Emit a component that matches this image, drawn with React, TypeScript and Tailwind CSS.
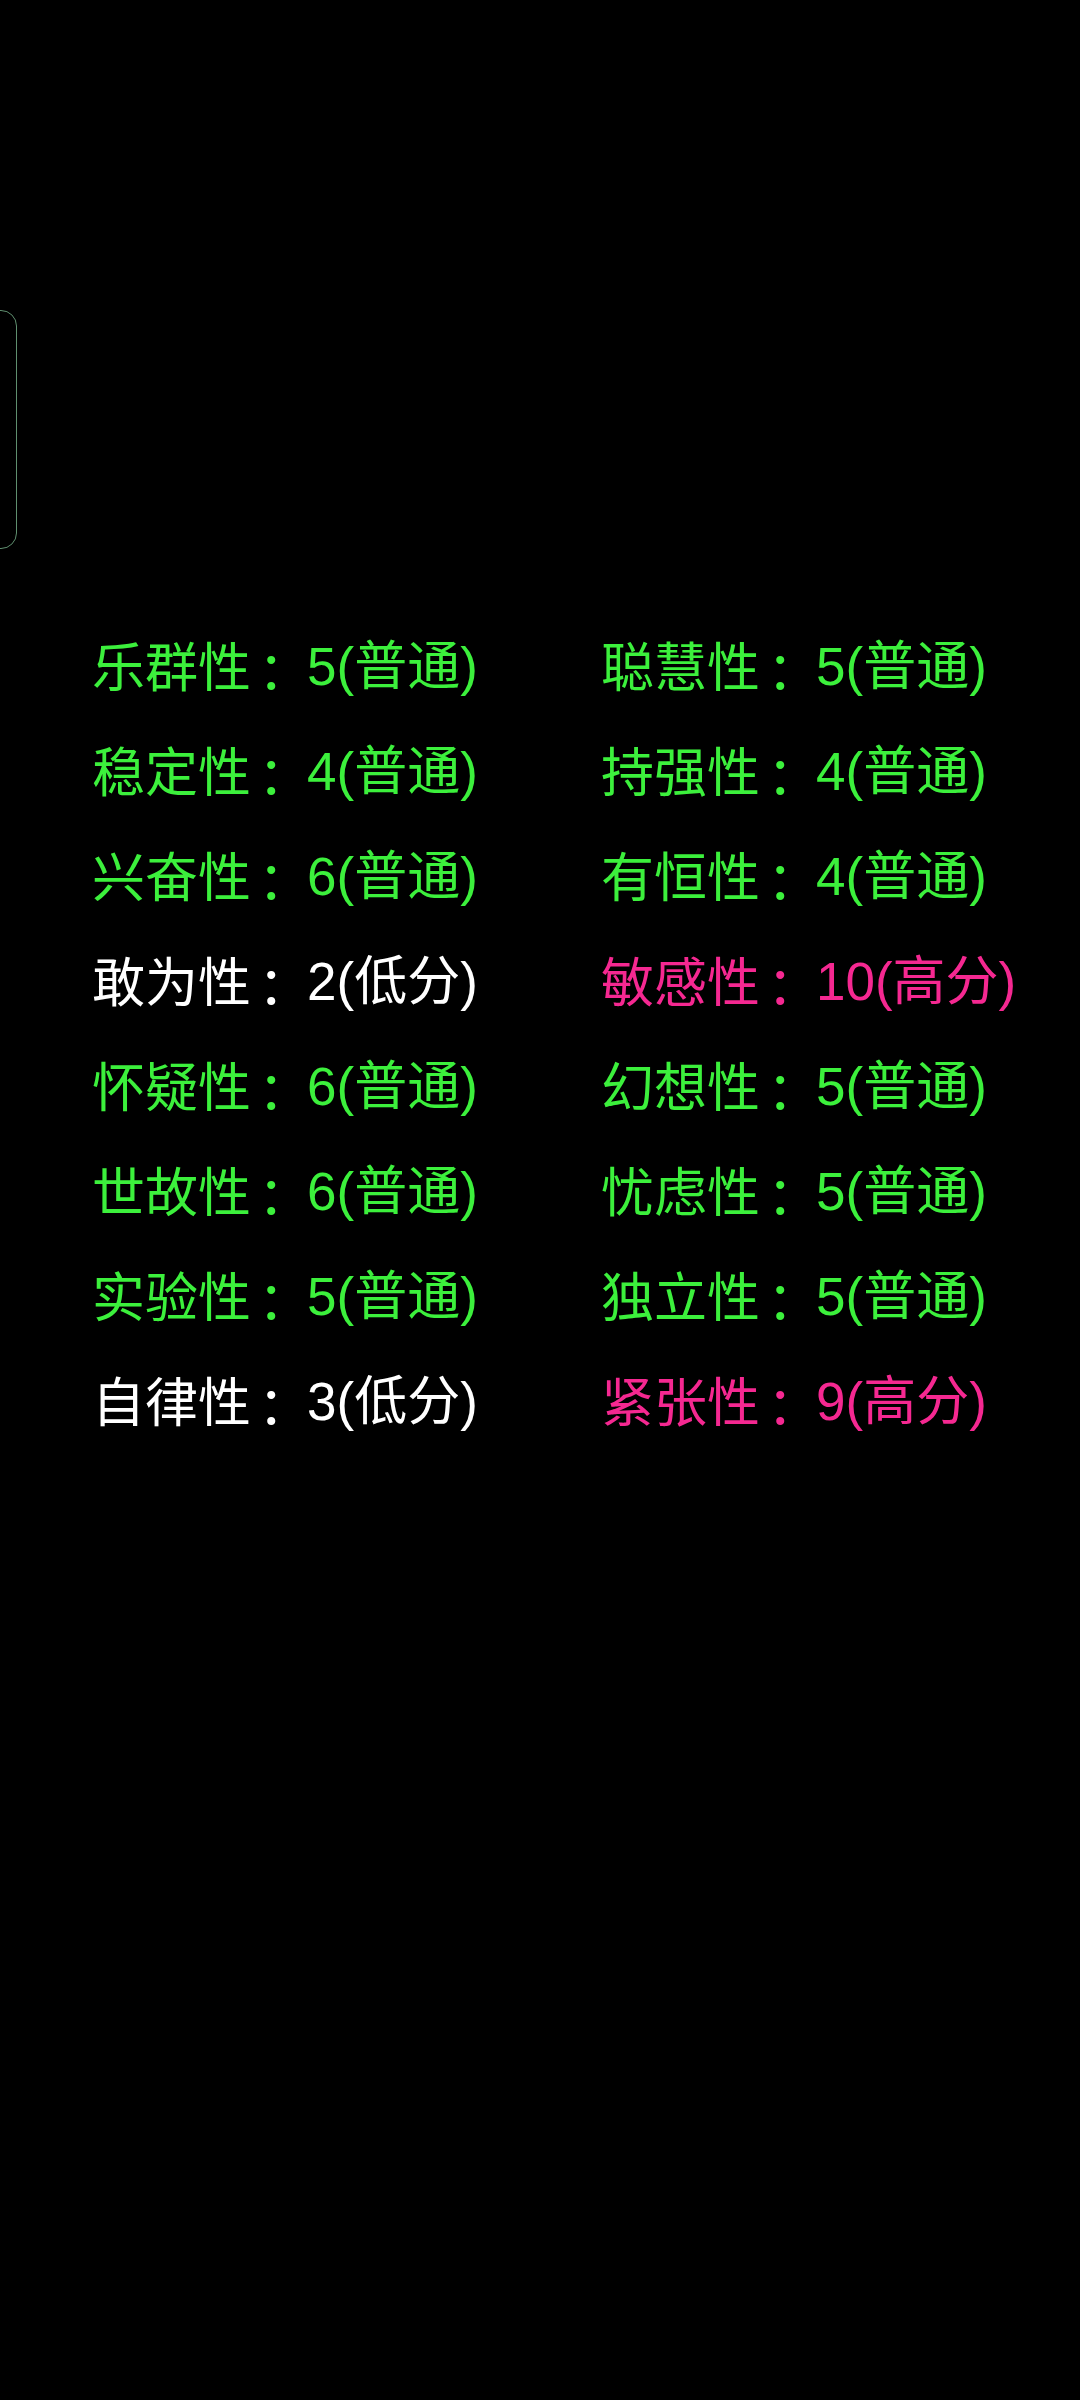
import React from 'react';

type Trait = { name: string; score: number; level: string };

const traits: Trait[] = [
  { name: '乐群性', score: 5, level: '普通' },
  { name: '聪慧性', score: 5, level: '普通' },
  { name: '稳定性', score: 4, level: '普通' },
  { name: '持强性', score: 4, level: '普通' },
  { name: '兴奋性', score: 6, level: '普通' },
  { name: '有恒性', score: 4, level: '普通' },
  { name: '敢为性', score: 2, level: '低分' },
  { name: '敏感性', score: 10, level: '高分' },
  { name: '怀疑性', score: 6, level: '普通' },
  { name: '幻想性', score: 5, level: '普通' },
  { name: '世故性', score: 6, level: '普通' },
  { name: '忧虑性', score: 5, level: '普通' },
  { name: '实验性', score: 5, level: '普通' },
  { name: '独立性', score: 5, level: '普通' },
  { name: '自律性', score: 3, level: '低分' },
  { name: '紧张性', score: 9, level: '高分' },
];

const colorFor = (level: string) => {
  if (level === '低分') return 'text-white';
  if (level === '高分') return 'text-[#f52891]';
  return 'text-[#3cf03c]';
};

const App = () => {
  return (
    <div className="min-h-[2400px] w-[1080px] bg-black overflow-hidden font-['Liberation_Sans','Noto_Sans_CJK_SC',sans-serif]">
      <div className="pt-[310px]">
        <div className="-ml-[18px] h-[239px] w-[35px] rounded-[16px] border border-[#5f8f6f]" />
      </div>

      <div className="mt-[63px] grid grid-cols-[509px_1fr] pl-[92px]">
        {traits.map((t) => (
          <div
            key={t.name}
            className={`h-[105px] flex items-center text-[53px] whitespace-nowrap ${colorFor(t.level)}`}
          >
            <span className="font-['Noto_Sans_CJK_SC',sans-serif]">{t.name}</span>
            <span className="relative left-[7px] top-[3px] font-['Noto_Sans_CJK_SC',sans-serif]">：</span>
            <span className="ml-[3px]">
              {t.score}(<span className="font-['Noto_Sans_CJK_SC',sans-serif]">{t.level}</span>)
            </span>
          </div>
        ))}
      </div>
    </div>
  );
};

export default App;
